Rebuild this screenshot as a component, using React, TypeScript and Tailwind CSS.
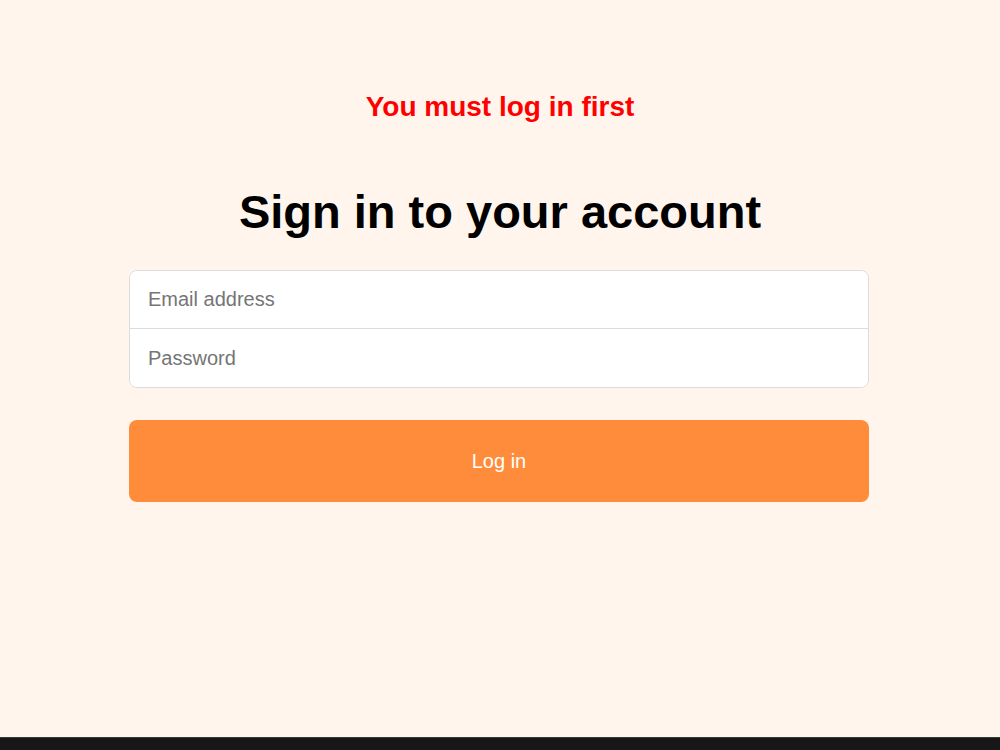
export default function App() {
  return (
    <div className="flex flex-col min-h-[750px] bg-[#fff5ec] font-['Liberation_Sans',Arial,sans-serif]">
      <main className="flex-1 flex flex-col items-center pt-[90px]">
        <p className="text-[28px] leading-[34px] font-bold text-[#ff0000]">You must log in first</p>

        <h1 className="mt-[60px] text-[47px] leading-[56px] font-bold text-black">Sign in to your account</h1>

        <form className="mt-[30px] w-[740px] -translate-x-px flex flex-col" onSubmit={e => e.preventDefault()}>
          <div className="rounded-lg border border-[#dcdcdc] bg-white overflow-hidden">
            <input
              type="email"
              autoFocus
              placeholder="Email address"
              className="block w-full h-[58px] px-[18px] text-[20px] text-gray-900 placeholder:text-[#757575] bg-white outline-none border-b border-[#dcdcdc]"
            />
            <input
              type="password"
              placeholder="Password"
              className="block w-full h-[58px] px-[18px] text-[20px] text-gray-900 placeholder:text-[#757575] bg-white outline-none"
            />
          </div>

          <button
            type="submit"
            className="mt-[32px] h-[82px] rounded-lg bg-[#ff8c3a] text-white text-[20px]"
          >
            Log in
          </button>
        </form>
      </main>

      <footer className="h-[13px] bg-[#171717] border-t border-[#3a3a36]" />
    </div>
  );
}
